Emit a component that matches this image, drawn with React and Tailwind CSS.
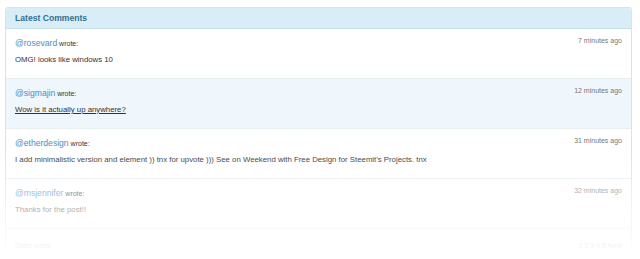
import React from "react";

const comments = [
  { user: "rosevard", time: "7 minutes ago", body: "OMG! looks like windows 10" },
  { user: "sigmajin", time: "12 minutes ago", body: "Wow is it actually up anywhere?", active: true },
  {
    user: "etherdesign",
    time: "31 minutes ago",
    body: "I add minimalistic version and element )) tnx for upvote ))) See on Weekend with Free Design for Steemit's Projects. tnx",
  },
  { user: "msjennifer", time: "32 minutes ago", body: "Thanks for the post!!" },
];

const CommentRow = ({ c }) => (
  <div
    className={`h-[50px] border-b border-[#e7eef2] px-[9px] pt-[7px] ${
      c.active ? "bg-[#eff6fc]" : "bg-white"
    }`}
  >
    <div className="flex justify-between items-center h-[11px]">
      <div className="leading-[11px]">
        <span className="text-[8.6px] text-[#4a8ec9]">@{c.user}</span>
        <span className="text-[7px] text-[#333]"> wrote:</span>
      </div>
      <span className="text-[7px] text-[#777]">{c.time}</span>
    </div>
    <p className={`mt-[8px] text-[7.8px] leading-[10px] text-[#333] ${c.active ? "underline" : ""}`}>
      {c.body}
    </p>
  </div>
);

export default function App() {
  return (
    <div className="relative w-[640px] h-[259px] overflow-hidden bg-white pt-[7px] pl-[5px] font-['Liberation_Sans',Arial,sans-serif]">
      <div className="w-[627px] border border-[#d5e3eb] rounded-t-[3px]">
        <div className="h-[21px] flex items-center px-[9px] bg-[#d9edf7] border-b border-[#c6e2f0] rounded-t-[3px]">
          <h3 className="text-[8.6px] font-bold text-[#31708f]">Latest Comments</h3>
        </div>
        {comments.map((c) => (
          <CommentRow key={c.user} c={c} />
        ))}
        <div className="h-[40px] flex justify-between items-center px-[9px] pb-[6px] text-[7px] text-[#4a8ec9]">
          <span>Older posts</span>
          <span>1 2 3 4 5 Next</span>
        </div>
      </div>
      {/* fade out at the bottom */}
      <div className="absolute inset-x-0 bottom-0 h-[110px] bg-linear-to-b from-white/0 via-white/55 to-white" />
    </div>
  );
}
